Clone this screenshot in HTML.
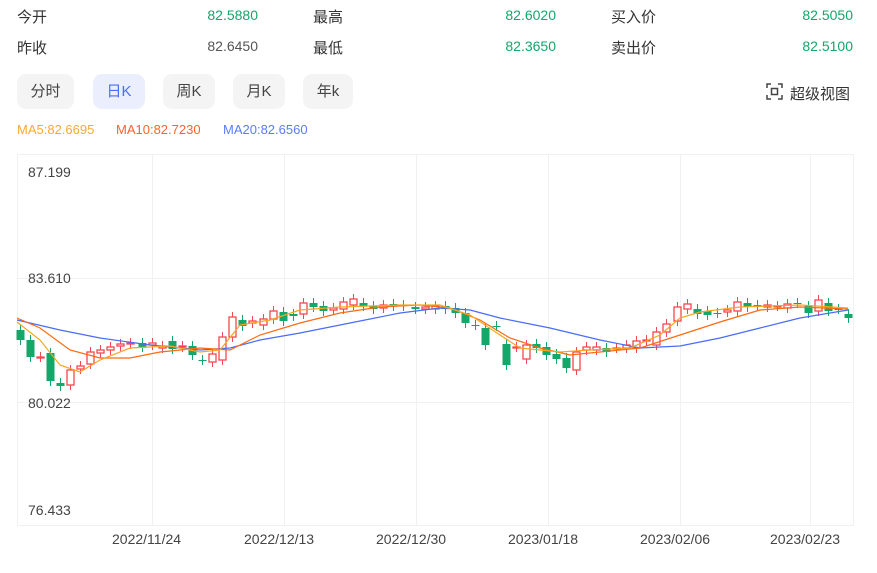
<!DOCTYPE html>
<html><head><meta charset="utf-8"><style>
body{margin:0;width:877px;height:573px;background:#fff;font-family:"Liberation Sans","Noto Sans CJK SC",sans-serif;position:relative;overflow:hidden;color:#333}
.a{position:absolute;white-space:nowrap}
.l{font-size:15px;color:#333}
.v{font-size:14px;text-align:right;width:100px}
.g{color:#13a76a}
.btn{position:absolute;top:74px;height:35px;border-radius:9px;background:#f4f4f4;font-size:15px;line-height:35px;text-align:center;color:#444}
.ma{font-size:13px;top:122px}
.ax{font-size:14px;color:#444}
.dt{font-size:14px;color:#444;top:531px}
</style></head><body>
<div class="a l" style="left:17px;top:6px">今开</div>
<div class="a v g" style="left:158px;top:7px">82.5880</div>
<div class="a l" style="left:313px;top:6px">最高</div>
<div class="a v g" style="left:456px;top:7px">82.6020</div>
<div class="a l" style="left:611px;top:6px">买入价</div>
<div class="a v g" style="left:753px;top:7px">82.5050</div>
<div class="a l" style="left:17px;top:37px">昨收</div>
<div class="a v" style="left:158px;top:38px;color:#555">82.6450</div>
<div class="a l" style="left:313px;top:37px">最低</div>
<div class="a v g" style="left:456px;top:38px">82.3650</div>
<div class="a l" style="left:611px;top:37px">卖出价</div>
<div class="a v g" style="left:753px;top:38px">82.5100</div>

<div class="btn" style="left:17px;width:57px">分时</div>
<div class="btn" style="left:93px;width:52px;background:#ebeffd;color:#4a6cf7">日K</div>
<div class="btn" style="left:163px;width:52px">周K</div>
<div class="btn" style="left:233px;width:52px">月K</div>
<div class="btn" style="left:303px;width:50px">年k</div>
<svg class="a" style="left:766px;top:83px" width="17" height="17" viewBox="0 0 17 17" fill="none" stroke="#444" stroke-width="1.5"><path d="M1 5V1h4M12 1h4v4M16 12v4h-4M5 16H1v-4"/><rect x="5.5" y="5.5" width="6" height="6"/></svg>
<div class="a" style="left:790px;top:83px;font-size:15px;color:#333">超级视图</div>

<div class="a ma" style="left:17px;color:#f7a935">MA5:82.6695</div>
<div class="a ma" style="left:116px;color:#f5652c">MA10:82.7230</div>
<div class="a ma" style="left:223px;color:#5b7cf6">MA20:82.6560</div>

<svg class="a" style="left:0;top:0" width="877" height="573" id="ch">
<g stroke="#f1f1f1" stroke-width="1" fill="none">
<rect x="17.5" y="154.5" width="836" height="371"/>
<line x1="152.5" y1="155" x2="152.5" y2="525"/><line x1="284.5" y1="155" x2="284.5" y2="525"/><line x1="416.5" y1="155" x2="416.5" y2="525"/><line x1="548.5" y1="155" x2="548.5" y2="525"/><line x1="680.5" y1="155" x2="680.5" y2="525"/><line x1="810.5" y1="155" x2="810.5" y2="525"/>
<line x1="18" y1="278.5" x2="853" y2="278.5"/><line x1="18" y1="402.5" x2="853" y2="402.5"/>
</g>
<g id="cd"></g>
<polyline fill="none" stroke="#4a6cf7" stroke-width="1.2" points="17,320 60,330 100,338 150,345 200,350 230,348 260,340 300,333 350,323 400,313 440,308 470,310 500,318 550,328 600,340 640,348 680,346 720,338 760,328 800,318 848,310"/>
<polyline fill="none" stroke="#ff6a10" stroke-width="1.2" points="17,318 40,328 70,350 100,358 130,358 160,352 200,348 230,350 260,335 300,323 340,313 380,307 420,305 450,308 480,320 510,338 540,348 570,355 600,352 640,348 680,335 720,322 760,310 800,307 848,309"/>
<polyline fill="none" stroke="#f7a620" stroke-width="1.2" points="17,322 40,340 60,365 80,372 100,360 130,348 170,346 200,352 220,350 240,325 270,320 300,310 340,307 400,305 440,305 470,315 500,335 520,348 560,352 590,350 630,348 660,335 680,318 700,312 740,307 800,305 848,308"/>
</svg>
<div class="a ax" style="left:28px;top:164px">87.199</div>
<div class="a ax" style="left:28px;top:270px">83.610</div>
<div class="a ax" style="left:28px;top:395px">80.022</div>
<div class="a ax" style="left:28px;top:502px">76.433</div>
<div class="a dt" style="left:112px">2022/11/24</div>
<div class="a dt" style="left:244px">2022/12/13</div>
<div class="a dt" style="left:376px">2022/12/30</div>
<div class="a dt" style="left:508px">2023/01/18</div>
<div class="a dt" style="left:640px">2023/02/06</div>
<div class="a dt" style="left:770px">2023/02/23</div>
<script>
var d=[[20,'g',330,340],[30,'g',340,357],[40,'r',357,357],[50,'g',353,381],[60,'g',383,386],[70,'r',370,385],[80,'r',366,369],[90,'r',352,364],[100,'r',350,353],[110,'r',347,350],[120,'r',344,346],[130,'r',343,344],[142,'g',343,347],[152,'r',343,345],[162,'r',346,348],[172,'g',341,349],[182,'r',346,347],[192,'g',346,355],[202,'g',360,360],[212,'r',354,362],[222,'r',337,360],[232,'r',317,337],[242,'g',320,326],[252,'r',321,323],[263,'r',319,325],[273,'r',311,319],[283,'g',312,321],[293,'g',314,316],[303,'r',303,314],[313,'g',303,307],[323,'g',306,311],[333,'r',308,310],[343,'r',302,309],[353,'r',299,305],[363,'g',303,306],[373,'g',306,309],[383,'r',305,308],[393,'g',304,306],[403,'g',305,306],[415,'g',307,309],[425,'r',307,309],[435,'r',306,309],[445,'g',306,309],[455,'g',308,313],[465,'g',313,323],[475,'g',325,325],[485,'g',328,345],[496,'g',326,326],[506,'g',344,365],[516,'r',347,347],[526,'r',345,359],[536,'g',344,348],[546,'g',347,355],[556,'g',354,359],[566,'g',358,368],[576,'r',352,370],[586,'r',347,350],[596,'r',347,350],[606,'g',348,352],[616,'r',348,348],[626,'r',345,348],[636,'r',341,348],[646,'r',340,341],[656,'r',332,345],[666,'r',324,332],[677,'r',307,321],[687,'r',304,309],[697,'g',309,314],[707,'g',311,315],[717,'g',313,313],[727,'r',310,312],[737,'r',302,311],[747,'g',303,307],[757,'g',305,305],[767,'r',305,307],[777,'r',306,306],[787,'r',304,308],[797,'g',303,303],[808,'g',306,313],[818,'r',300,311],[828,'g',303,311],[838,'g',309,309],[848,'g',314,318]];
var s='';d.forEach(function(c){var x=c[0],t=c[2],b=c[3],col=c[1]=='r'?'#f5474f':'#13a76a';
s+='<line x1="'+(x+.5)+'" y1="'+(t-5)+'" x2="'+(x+.5)+'" y2="'+(b+5)+'" stroke="'+col+'" stroke-width="1"/>';
var h=Math.max(b-t,1);
if(c[1]=='r')s+='<rect x="'+(x-3)+'" y="'+t+'" width="7" height="'+h+'" fill="#fff" stroke="'+col+'" stroke-width="1.3"/>';
else s+='<rect x="'+(x-3.5)+'" y="'+t+'" width="8" height="'+h+'" fill="'+col+'"/>';});
document.getElementById('cd').innerHTML=s;
</script>
</body></html>
